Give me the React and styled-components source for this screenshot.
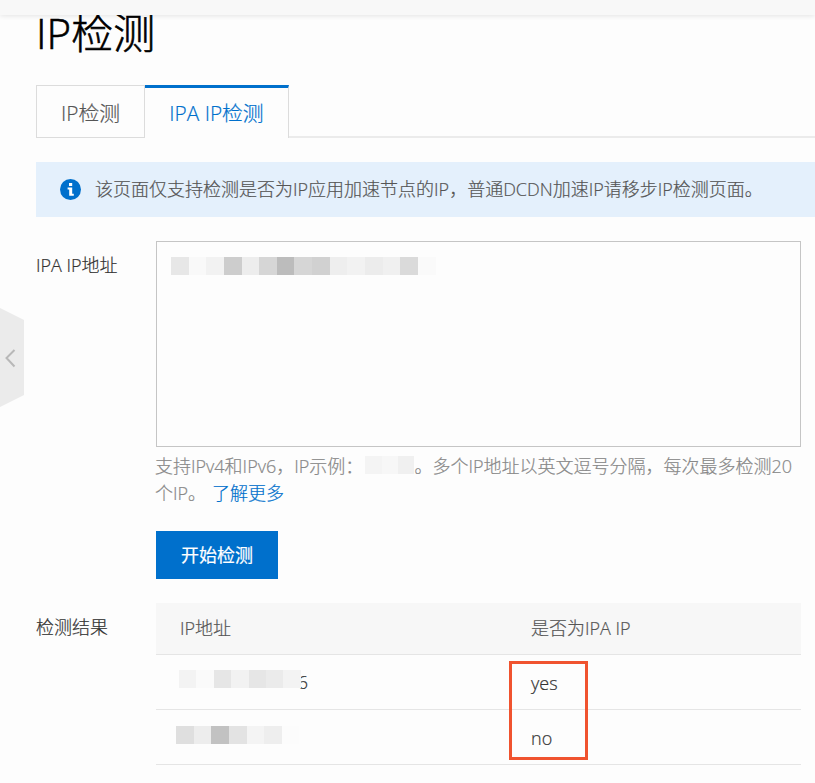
import React from "react";
import styled, { createGlobalStyle } from "styled-components";

const GlobalStyle = createGlobalStyle`
  *, *::before, *::after { box-sizing: border-box; }
  body {
    margin: 0;
    overflow: hidden;
    background: #fdfdfd;
    color: #333;
    font-family: "Open Sans", "Noto Sans CJK SC", sans-serif;
    font-size: 18px;
    font-weight: 300;
    -webkit-text-stroke: 0.2px currentColor;
  }
`;

const Page = styled.div`
  position: relative;
  height: 783px;
  overflow: hidden;
`;

const TopBar = styled.header`
  position: relative;
  z-index: 1;
  height: 15px;
  background: #f8f8f8;
  box-shadow: 0 1px 5px rgba(0, 0, 0, 0.1);
`;

const Content = styled.main`
  padding-left: 36px;
`;

const Title = styled.h1`
  margin: 0;
  height: 70px;
  color: #000;
  font-size: 42px;
  font-weight: 300;
  line-height: 36px;
  -webkit-text-stroke-width: 0.6px;
`;

const Tabs = styled.nav`
  display: flex;
  height: 53px;
`;

const Tab = styled.button`
  width: ${(p) => p.$width};
  padding: ${(p) => (p.$active ? "0" : "2px")} 0 0;
  border: solid #dcdcdc;
  border-width: ${(p) => (p.$active ? "3px 1px 0 0" : "1px")};
  border-top-color: ${(p) => (p.$active ? "#0070cc" : "#dcdcdc")};
  background: transparent;
  color: ${(p) => (p.$active ? "#0070cc" : "#555")};
  font: inherit;
  font-size: 20.8px;
  line-height: 48px;
  white-space: nowrap;
`;

const TabRule = styled.div`
  flex: 1;
  height: 53px;
  border-bottom: 2px solid #ebebeb;
`;

const Notice = styled.section`
  display: flex;
  align-items: center;
  gap: 14px;
  height: 55px;
  margin-top: 24px;
  padding-left: 24px;
  background: #e4f0fc;
  color: #555;
  white-space: nowrap;
`;

const NoticeText = styled.span`
  padding-bottom: 3px;
`;

const Form = styled.div`
  display: grid;
  grid-template-columns: 120px 645px;
  margin-top: 24px;
`;

const Label = styled.div`
  padding-top: 11px;
  line-height: 27px;
`;

const AddressBox = styled.div`
  height: 206px;
  padding: 15px 14px;
  border: 1px solid #c5c5c5;
`;

const Help = styled.p`
  margin: 6px 0 0 -1px;
  color: #888;
  line-height: 27px;
  white-space: nowrap;
`;

const Link = styled.a`
  margin-left: 6px;
  color: #0070cc;
`;

const SubmitButton = styled.button`
  display: block;
  width: 122px;
  height: 48px;
  margin: 24px 0;
  padding: 0;
  border: 0;
  background: #0070cc;
  color: #fff;
  font: inherit;
  font-weight: 400;
  line-height: 48px;
`;

const Results = styled.div`
  position: relative;
`;

const Row = styled.div`
  display: grid;
  grid-template-columns: 351px 1fr;
  align-items: center;
  height: ${(p) => (p.$head ? "52px" : "55px")};
  padding: ${(p) => (p.$head ? "0 0 3px 24px" : "1px 0 0 24px")};
  border-bottom: 1px solid #e5e5e5;
  background: ${(p) => (p.$head ? "#f7f7f7" : "transparent")};
  color: ${(p) => (p.$head ? "#555" : "#333")};
`;

const MaskedCell = styled.div`
  display: flex;
  align-items: center;
  margin-left: ${(p) => p.$shift};
  margin-top: ${(p) => p.$top || "0"};
`;

const Tail = styled.span`
  margin: 7px 0 0 -3px;
`;

const Pixels = styled.span`
  position: relative;
  z-index: 1;
  display: inline-flex;
  height: 18px;
  vertical-align: ${(p) => p.$align || "top"};
  margin-left: ${(p) => p.$gap || "0"};
`;

const Pixel = styled.span`
  width: ${(p) => p.$width || "17.65px"};
  background: ${(p) => p.$tone};
`;

const Highlight = styled.div`
  position: absolute;
  left: 353px;
  top: 58px;
  width: 79px;
  height: 99px;
  border: 3px solid #f0532f;
`;

const Collapse = styled.svg`
  position: absolute;
  left: 0;
  top: 308px;
`;

function Mosaic({ tones, width, gap, align }) {
  return (
    <Pixels $gap={gap} $align={align}>
      {tones.map((tone, i) => (
        <Pixel key={i} $tone={tone} $width={width} />
      ))}
    </Pixels>
  );
}

function InfoIcon() {
  return (
    <svg width="21" height="21" viewBox="0 0 21 21">
      <circle cx="10.5" cy="10.5" r="10.5" fill="#0070cc" />
      <path d="M9 4h3.2v3H9zM7.6 8.6h4.6v6.1h1.6v2H9.2v-6.1H7.6z" fill="#fff" />
    </svg>
  );
}

const addressTones = [
  "#e7e7e7", "#f9f9f9", "#f2f2f2", "#cdcdcd", "#ededed", "#d6d6d6", "#bcbcbc", "#d6d6d6",
  "#d1d1d1", "#eeeeee", "#f2f2f2", "#ececec", "#f0f0f0", "#dadada", "#fafafa",
];

export default function App() {
  return (
    <>
      <GlobalStyle />
      <Page>
        <TopBar />
        <Content>
          <Title>IP检测</Title>
          <Tabs>
            <Tab $width="109px">IP检测</Tab>
            <Tab $active $width="144px">IPA IP检测</Tab>
            <TabRule />
          </Tabs>
          <Notice>
            <InfoIcon />
            <NoticeText>该页面仅支持检测是否为IP应用加速节点的IP，普通DCDN加速IP请移步IP检测页面。</NoticeText>
          </Notice>
          <Form>
            <Label>IPA IP地址</Label>
            <div>
              <AddressBox>
                <Mosaic tones={addressTones} />
              </AddressBox>
              <Help>
                支持IPv4和IPv6，IP示例：
                <Mosaic tones={["#f4f4f4", "#f7f7f7", "#f0f0f0"]} width="16.4px" gap="2px" align="-1px" />
                <span>。多个IP地址以英文逗号分隔，每次最多检测20</span>
                <br />
                个IP。
                <Link>了解更多</Link>
              </Help>
              <SubmitButton>开始检测</SubmitButton>
            </div>
            <Label>检测结果</Label>
            <Results>
              <Row $head>
                <span>IP地址</span>
                <span>是否为IPA IP</span>
              </Row>
              <Row>
                <MaskedCell $shift="-1px" $top="-8px">
                  <Mosaic
                    width="17.4px"
                    tones={["#f3f3f3", "#fafafa", "#e6e6e6", "#f2f2f2", "#e6e6e6", "#ebebeb", "#f3f3f3"]}
                  />
                  <Tail>6</Tail>
                </MaskedCell>
                <span>yes</span>
              </Row>
              <Row>
                <MaskedCell $shift="-4px" $top="-6px">
                  <Mosaic tones={["#dfdfdf", "#ededed", "#c2c2c2", "#e3e3e3", "#f4f4f4", "#eeeeee", "#fcfcfc"]} />
                </MaskedCell>
                <span>no</span>
              </Row>
              <Highlight />
            </Results>
          </Form>
        </Content>
        <Collapse width="24" height="100" viewBox="0 0 24 100">
          <path d="M0 0 24 12V87L0 99Z" fill="#ebebeb" />
          <path d="M14.5 42 6.5 50l8 8.5" fill="none" stroke="#b8b8b8" strokeWidth="2" />
        </Collapse>
      </Page>
    </>
  );
}
